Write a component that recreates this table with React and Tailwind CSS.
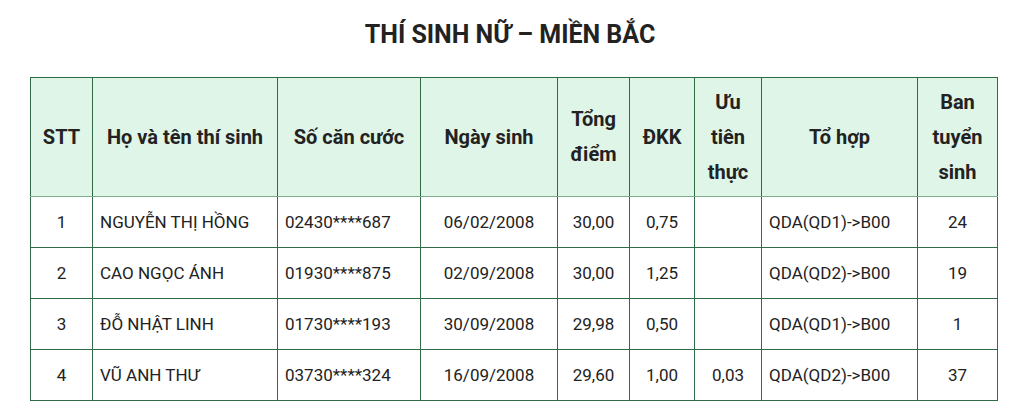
import React from "react";

const rows = [
  ["1", "NGUYỄN THỊ HỒNG", "02430****687", "06/02/2008", "30,00", "0,75", "", "QDA(QD1)->B00", "24"],
  ["2", "CAO NGỌC ÁNH", "01930****875", "02/09/2008", "30,00", "1,25", "", "QDA(QD2)->B00", "19"],
  ["3", "ĐỖ NHẬT LINH", "01730****193", "30/09/2008", "29,98", "0,50", "", "QDA(QD1)->B00", "1"],
  ["4", "VŨ ANH THƯ", "03730****324", "16/09/2008", "29,60", "1,00", "0,03", "QDA(QD2)->B00", "37"],
];

const widths = [62, 185, 143, 137, 72, 65, 67, 156, 80];
const aligns = ["text-center", "text-left", "text-left", "text-center", "text-center", "text-center", "text-center", "text-left", "text-center"];

export default function App() {
  return (
    <div className="w-[1020px] h-[408px] bg-white text-[#222] overflow-hidden" style={{ fontFamily: "Roboto, 'Noto Sans', sans-serif" }}>
      <h1 className="text-center font-bold text-[25px] leading-[30px] pt-[20px] text-[#222]">THÍ SINH NỮ – MIỀN BẮC</h1>
      <div className="pl-[30px] pt-[27px]">
        <table className="table-fixed border-collapse border border-[#5e8f6f] w-[967px]">
          <colgroup>
            {widths.map((w, i) => (
              <col key={i} style={{ width: w }} />
            ))}
          </colgroup>
          <thead>
            <tr className="bg-[#dff5e8] h-[119px]">
              {[
                ["STT"],
                ["Họ và tên thí sinh"],
                ["Số căn cước"],
                ["Ngày sinh"],
                ["Tổng", "điểm"],
                ["ĐKK"],
                ["Ưu", "tiên", "thực"],
                ["Tổ hợp"],
                ["Ban", "tuyển", "sinh"],
              ].map((lines, i) => (
                <th key={i} className="border border-[#2f6b45] border-b-[#7fae8f] text-center align-middle font-bold text-[20px] leading-[35px] px-[2px]">
                  {lines.map((l, j) => (
                    <div key={j}>{l}</div>
                  ))}
                </th>
              ))}
            </tr>
          </thead>
          <tbody>
            {rows.map((r, ri) => (
              <tr key={ri} className="h-[51px]">
                {r.map((c, ci) => (
                  <td key={ci} className={`border border-[#2f6b45] ${aligns[ci]} align-middle text-[17px] leading-[24px] px-[7px] font-normal`}>
                    {c}
                  </td>
                ))}
              </tr>
            ))}
          </tbody>
        </table>
      </div>
    </div>
  );
}
